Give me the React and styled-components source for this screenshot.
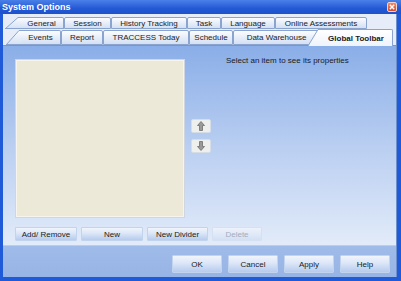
import React from 'react';
import styled, { createGlobalStyle, css } from 'styled-components';

const Global = createGlobalStyle`
  html, body {
    margin: 0;
    padding: 0;
    overflow: hidden;
    background: #ffffff;
  }
`;

const Window = styled.div`
  width: 401px;
  height: 281px;
  display: flex;
  flex-direction: column;
  background: #1f5bd8;
  font-family: "Liberation Sans", Arial, sans-serif;
  font-size: 8px;
  color: #1b1b1b;
`;

const TitleBar = styled.div`
  height: 14px;
  display: flex;
  align-items: center;
  justify-content: space-between;
  padding: 0 4px 0 2px;
  background: linear-gradient(#4a80e8, #2459d6 60%, #1d52cc);
  color: #ffffff;
  font-weight: bold;
  font-size: 9px;
`;

const Close = styled.div`
  width: 10px;
  height: 10px;
  box-sizing: border-box;
  border: 1px solid #f3d2c8;
  border-radius: 2px;
  background: linear-gradient(#f08a66, #d9482b);
  display: flex;
  align-items: center;
  justify-content: center;
`;

const Frame = styled.div`
  flex: 1;
  display: flex;
  padding: 0 4px 4px 3px;
`;

const Inner = styled.div`
  flex: 1;
  display: flex;
  flex-direction: column;
  background: #e6edf8;
  border-right: 1px solid #6e90cc;
`;

const TabStrip = styled.div`
  height: 31px;
  padding-top: 3px;
  box-sizing: border-box;
  display: flex;
  flex-direction: column;
`;

const TabRow = styled.div`
  display: flex;
  align-items: flex-end;
  height: ${p => p.$h}px;
  padding-left: ${p => p.$indent}px;
  margin-top: ${p => p.$overlap || 0}px;
`;

const tabFill = css`
  background: ${p => p.$selected
    ? 'linear-gradient(#ffffff, #eef3fb)'
    : 'linear-gradient(#fbfcfe, #d3e0f4)'};
`;

const Tab = styled.div`
  position: relative;
  z-index: ${p => (p.$selected ? 2 : 1)};
  width: ${p => p.$w}px;
  height: ${p => (p.$selected ? 17 : p.$h)}px;
  box-sizing: border-box;
  display: flex;
  align-items: center;
  justify-content: center;
  ${tabFill};
  border: 1px solid #8aa4cf;
  border-left: ${p => (p.$noLeft ? 'none' : '1px solid #8aa4cf')};
  border-bottom: ${p => (p.$selected ? 'none' : '1px solid #8aa4cf')};
  border-radius: ${p => (p.$noLeft ? '0 2px 0 0' : '2px 2px 0 0')};
  font-weight: ${p => (p.$selected ? 'bold' : 'normal')};
  margin-bottom: ${p => (p.$selected ? -1 : 0)}px;
  white-space: nowrap;
`;

const SlantWrap = styled.svg`
  position: relative;
  z-index: ${p => (p.$selected ? 2 : 1)};
  flex: none;
  display: block;
  margin-left: ${p => p.$pull || 0}px;
  margin-bottom: ${p => (p.$selected ? -1 : 0)}px;
`;

const Panel = styled.div`
  display: flex;
  flex-direction: column;
  border-top: 1px solid #7896c8;
  background: linear-gradient(#8aaee8, #b9cef1 50%, #e2ebf9);
  padding: 13px 0 4px 12px;
`;

const Body = styled.div`
  display: flex;
`;

const ListBox = styled.div`
  width: 170px;
  height: 159px;
  box-sizing: border-box;
  background: #ece9d9;
  border: 1px solid #cfd6e2;
  box-shadow: inset 0 0 0 1px #f6f4ec;
`;

const ArrowCol = styled.div`
  display: flex;
  flex-direction: column;
  gap: 6px;
  margin-left: 6px;
  padding-top: 60px;
`;

const ArrowButton = styled.div`
  width: 20px;
  height: 14px;
  box-sizing: border-box;
  background: #eef0ee;
  border: 1px solid #d6dde6;
  border-radius: 2px;
  display: flex;
  align-items: center;
  justify-content: center;
`;

const Hint = styled.div`
  margin: -3px 0 0 15px;
  white-space: nowrap;
`;

const ButtonRow = styled.div`
  display: flex;
  gap: 4px;
  margin-top: 9px;
`;

const Button = styled.div`
  width: ${p => p.$w}px;
  height: ${p => p.$h || 14}px;
  box-sizing: border-box;
  display: flex;
  align-items: center;
  justify-content: center;
  background: ${p => p.$disabled
    ? 'linear-gradient(#edf2fb, #d3e0f4)'
    : 'linear-gradient(#f1f5fc, #dbe6f7 45%, #b6cbee)'};
  border: 1px solid ${p => (p.$disabled ? '#d5e0f2' : '#c2d3ee')};
  border-radius: 1px;
  color: ${p => (p.$disabled ? '#a3adbf' : '#1b1b1b')};
`;

const Footer = styled.div`
  flex: 1;
  display: flex;
  justify-content: flex-end;
  align-items: flex-start;
  gap: 6px;
  padding: 9px 6px 0 0;
  background: linear-gradient(#9fbbe9, #97b4e6);
  border-top: 1px solid #b9cdee;
`;

const Slant = ({ w, h, selected, pull }) => (
  <SlantWrap width={w} height={h} viewBox={`0 0 ${w} ${h}`} $selected={selected} $pull={pull}>
    <defs>
      <linearGradient id={selected ? 'sg' : 'ng'} x1="0" y1="0" x2="0" y2="1">
        <stop offset="0" stopColor={selected ? '#ffffff' : '#fbfcfe'} />
        <stop offset="1" stopColor={selected ? '#eef3fb' : '#d3e0f4'} />
      </linearGradient>
    </defs>
    <polygon points={`0,${h} ${w - 2},0.5 ${w},0.5 ${w},${h}`} fill={`url(#${selected ? 'sg' : 'ng'})`} />
    <polyline points={`0,${h} ${w - 2},0.5 ${w},0.5`} fill="none" stroke="#8aa4cf" strokeWidth="1" />
    {!selected && <line x1="0" y1={h - 0.5} x2={w} y2={h - 0.5} stroke="#8aa4cf" strokeWidth="1" />}
  </SlantWrap>
);

const Arrow = ({ down }) => (
  <svg width="8" height="10" viewBox="0 0 8 10" style={down ? { transform: 'rotate(180deg)' } : undefined}>
    <polygon points="4,0.5 7.5,4.5 5.5,4.5 5.5,9.5 2.5,9.5 2.5,4.5 0.5,4.5" fill="#9a9a9a" stroke="#6f6f6f" strokeWidth="0.8" strokeLinejoin="round" />
  </svg>
);

const row1 = [
  ['General', 44],
  ['Session', 47],
  ['History Tracking', 76],
  ['Task', 34],
  ['Language', 54],
  ['Online Assessments', 92],
];

const row2 = [
  ['Events', 40],
  ['Report', 42],
  ['TRACCESS Today', 86],
  ['Schedule', 44],
  ['Data Warehouse', 87],
];

export default function App() {
  return (
    <Window>
      <Global />
      <TitleBar>
        <span>System Options</span>
        <Close>
          <svg width="6" height="6" viewBox="0 0 6 6">
            <path d="M0.8 0.8 L5.2 5.2 M5.2 0.8 L0.8 5.2" stroke="#ffffff" strokeWidth="1.4" />
          </svg>
        </Close>
      </TitleBar>
      <Frame>
        <Inner>
          <TabStrip>
            <TabRow $h={12} $indent={2}>
              <Slant w={15} h={12} />
              {row1.map(([label, w], i) => (
                <Tab key={label} $w={w} $h={12} $noLeft={i === 0}>{label}</Tab>
              ))}
            </TabRow>
            <TabRow $h={16} $indent={3}>
              <Slant w={15} h={15} />
              {row2.map(([label, w], i) => (
                <Tab key={label} $w={w} $h={15} $noLeft={i === 0}>{label}</Tab>
              ))}
              <Slant w={12} h={17} selected pull={-12} />
              <Tab $w={73} $h={15} $selected $noLeft>Global Toolbar</Tab>
            </TabRow>
          </TabStrip>
          <Panel>
            <Body>
              <ListBox />
              <ArrowCol>
                <ArrowButton><Arrow /></ArrowButton>
                <ArrowButton><Arrow down /></ArrowButton>
              </ArrowCol>
              <Hint>Select an item to see its properties</Hint>
            </Body>
            <ButtonRow>
              <Button $w={62}>Add/ Remove</Button>
              <Button $w={62}>New</Button>
              <Button $w={61}>New Divider</Button>
              <Button $w={50} $disabled>Delete</Button>
            </ButtonRow>
          </Panel>
          <Footer>
            <Button $w={50} $h={18}>OK</Button>
            <Button $w={50} $h={18}>Cancel</Button>
            <Button $w={50} $h={18}>Apply</Button>
            <Button $w={50} $h={18}>Help</Button>
          </Footer>
        </Inner>
      </Frame>
    </Window>
  );
}
